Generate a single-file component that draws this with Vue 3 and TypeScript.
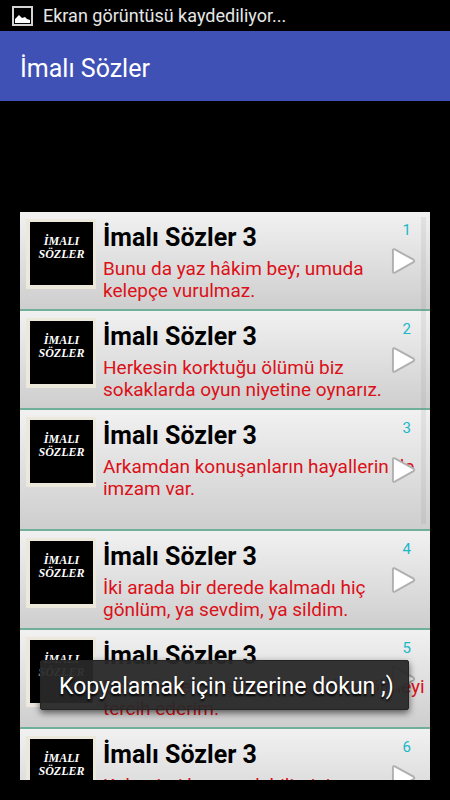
<script setup lang="ts">
interface Quote {
  id: number
  lines: string[]
}

const title = 'İmalı Sözler 3'

const quotes: Quote[] = [
  { id: 1, lines: ['Bunu da yaz hâkim bey; umuda', 'kelepçe vurulmaz.'] },
  { id: 2, lines: ['Herkesin korktuğu ölümü biz', 'sokaklarda oyun niyetine oynarız.'] },
  { id: 3, lines: ['Arkamdan konuşanların hayallerin de', 'imzam var.', ''] },
  { id: 4, lines: ['İki arada bir derede kalmadı hiç', 'gönlüm, ya sevdim, ya sildim.'] },
  { id: 5, lines: ['Diz çökerek yaşamaktansa ben ölmeyi', 'tercih ederim.'] },
  { id: 6, lines: ['Kalemimi kırmasak bilimini', ''] },
]
</script>

<template>
  <div class="screen">
    <div class="status">
      <svg class="status-icon" viewBox="0 0 21 20" aria-hidden="true">
        <rect x="1" y="1" width="19" height="18" fill="#000" stroke="#d4d4d4" stroke-width="2" />
        <path d="M3 17v-4l3-3 1-1 2 2 1 1 3-1 2 2 3 1v3z" fill="#fff" />
      </svg>
      <span>Ekran görüntüsü kaydediliyor...</span>
    </div>
    <header class="bar">
      <h1>İmalı Sözler</h1>
    </header>
    <main class="content">
      <ul class="list">
        <li v-for="quote in quotes" :key="quote.id" class="row">
          <div class="thumb"><span>İMALI</span><span>SÖZLER</span></div>
          <div class="body">
            <h2>{{ title }}</h2>
            <p><span v-for="(line, i) in quote.lines" :key="i" class="line">{{ line }}</span></p>
          </div>
          <div class="side">
            <span class="number">{{ quote.id }}</span>
            <svg class="arrow" viewBox="0 0 26 28" aria-hidden="true">
              <path d="M2 3.2Q2 1 4 2L23.4 12.6Q25 14 23.4 15.2L4 26Q2 27 2 24.8Z" fill="#fff" stroke="#b0b0b0" stroke-width="2" />
            </svg>
          </div>
        </li>
      </ul>
      <div class="scrollbar"></div>
    </main>
    <div class="toast" role="status">Kopyalamak için üzerine dokun ;)</div>
  </div>
</template>

<style>
body {
  background: #000;
}
</style>

<style scoped>
.screen {
  position: relative;
  display: flex;
  flex-direction: column;
  height: 100vh;
  overflow: hidden;
  background: #000;
  font-family: Roboto, "Noto Sans", sans-serif;
}
.status {
  display: flex;
  flex: none;
  align-items: center;
  gap: 10px;
  height: 31px;
  padding-left: 12px;
  color: #e6e6e6;
  font-size: 18px;
  line-height: 20px;
  white-space: nowrap;
}
.status-icon {
  width: 21px;
  height: 20px;
}
.bar {
  display: flex;
  flex: none;
  align-items: center;
  box-sizing: border-box;
  height: 70px;
  padding: 5px 20px 0;
  background: #3f51b5;
}
h1 {
  margin: 0;
  color: #fff;
  font-size: 25px;
  font-weight: 400;
  line-height: 32px;
}
.content {
  position: relative;
  flex: 1;
  min-height: 0;
  margin: 111px 20px 20px;
  overflow: hidden;
}
.list {
  margin: 0;
  padding: 0;
  list-style: none;
}
.row {
  position: relative;
  display: flex;
  gap: 7px;
  padding: 7px 6px;
  border-bottom: 2px solid #70b098;
  background: linear-gradient(#f1f1f1, #cecece);
}
.thumb {
  display: flex;
  flex: none;
  flex-direction: column;
  align-items: center;
  box-sizing: border-box;
  width: 70px;
  height: 70px;
  padding-top: 13px;
  border: solid #ece8dc;
  border-width: 3px 3px 4px 4px;
  background: #000;
  color: #fff;
  font-family: "Liberation Serif", serif;
  font-size: 12px;
  font-style: italic;
  font-weight: 700;
  line-height: 13px;
}
.body {
  flex: 1;
  min-width: 0;
  white-space: nowrap;
}
h2 {
  margin: 0;
  color: #000;
  font-size: 25px;
  font-weight: 700;
  line-height: 38px;
}
p {
  margin: 1px 0 0;
  color: #dc1018;
  font-size: 19px;
  line-height: 22px;
}
.line {
  display: block;
  min-height: 22px;
}
.side {
  position: absolute;
  top: 0;
  right: 14px;
  bottom: 0;
  display: flex;
  align-items: center;
}
.number {
  position: absolute;
  top: 8px;
  right: 5px;
  color: #18b8c8;
  font-size: 15px;
  line-height: 20px;
}
.arrow {
  width: 25px;
  height: 28px;
}
.scrollbar {
  position: absolute;
  top: 5px;
  right: 4px;
  width: 5px;
  height: 54%;
  background: rgba(120, 120, 120, 0.12);
}
.toast {
  position: absolute;
  right: 41px;
  bottom: 90px;
  left: 40px;
  box-sizing: border-box;
  padding: 11px 0 7px 18px;
  border: 1px solid #242424;
  border-radius: 2px;
  background: rgba(40, 40, 40, 0.95);
  box-shadow: 0 3px 7px rgba(0, 0, 0, 0.6);
  color: #fff;
  font-size: 23px;
  line-height: 30px;
  text-shadow: 0 2px 2px #000;
  white-space: nowrap;
}
</style>
